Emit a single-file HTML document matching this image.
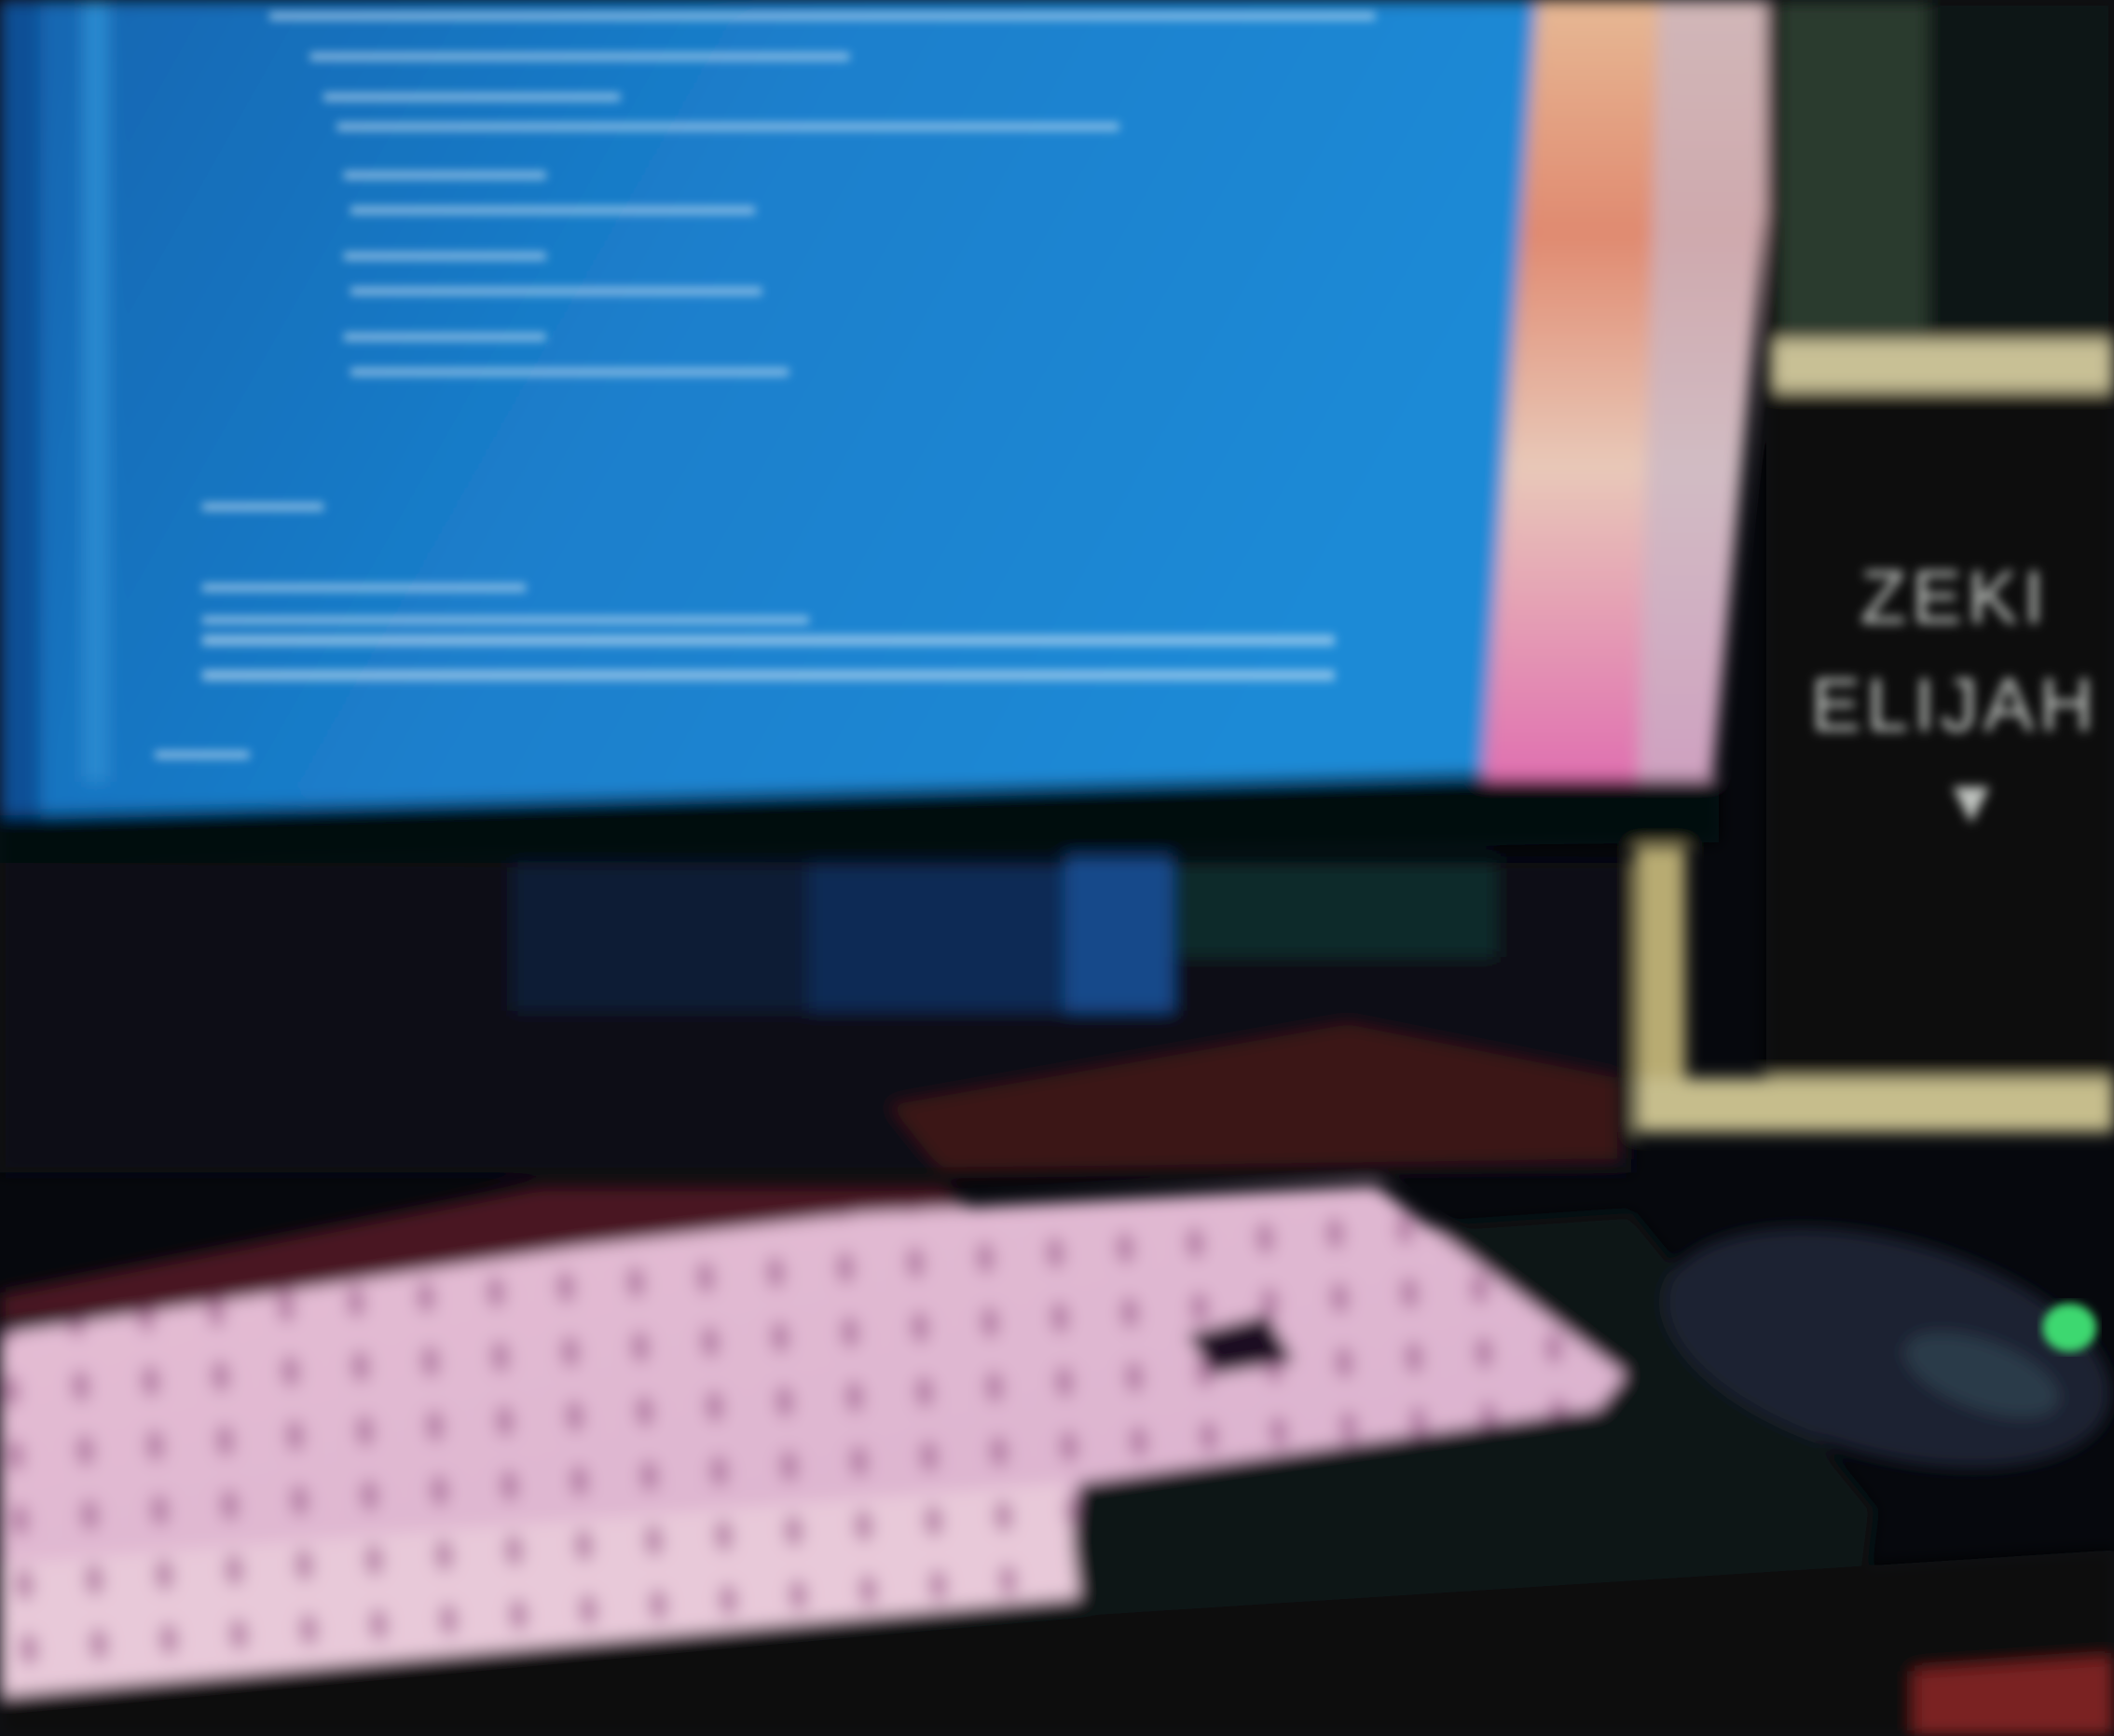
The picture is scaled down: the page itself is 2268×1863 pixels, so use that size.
<!DOCTYPE html>
<html><head><meta charset="utf-8"><style>
html,body{margin:0;padding:0;background:#05070c;}
svg{display:block;width:2268px;height:1863px;}
</style></head><body>
<svg viewBox="0 0 1568 1288" preserveAspectRatio="none" xmlns="http://www.w3.org/2000/svg">
<defs>
<filter id="b" x="-10%" y="-10%" width="120%" height="120%"><feGaussianBlur stdDeviation="6"/></filter>
<filter id="b2"><feGaussianBlur stdDeviation="3.5"/></filter>
<filter id="b3"><feGaussianBlur stdDeviation="4"/></filter>
<linearGradient id="scr" x1="0" y1="0" x2="1" y2="0.3">
<stop offset="0" stop-color="#1565b0"/><stop offset="0.5" stop-color="#1a7fcc"/><stop offset="1" stop-color="#1f8ad6"/></linearGradient>
<linearGradient id="kb" x1="0" y1="0" x2="1" y2="1">
<stop offset="0" stop-color="#e5bdd4"/><stop offset="1" stop-color="#d9b0cd"/></linearGradient>
<linearGradient id="pic" x1="0" y1="0" x2="0" y2="1">
<stop offset="0" stop-color="#e6b894"/><stop offset="0.3" stop-color="#e08a70"/><stop offset="0.6" stop-color="#e8c8b8"/><stop offset="1" stop-color="#e070b0"/></linearGradient>
<pattern id="keys" width="52" height="48" patternUnits="userSpaceOnUse" patternTransform="rotate(-4)">
<ellipse cx="40" cy="22" rx="7" ry="12" fill="#9a5a88" opacity="0.6"/>
</pattern>
<clipPath id="kbc"><polygon points="0,990 430,925 640,900 1020,880 1205,1020 1185,1045 800,1100 790,1185 0,1255"/></clipPath>
</defs>
<rect width="1568" height="1288" fill="#06080d"/>
<g filter="url(#b)">
<polygon points="0,0 1140,0 1105,575 0,605" fill="url(#scr)"/>
<polygon points="1140,0 1325,0 1270,578 1100,578" fill="url(#pic)"/>
<polygon points="1230,0 1325,0 1270,578 1215,578" fill="#c7b6c8" opacity="0.7"/>
<rect x="0" y="0" width="30" height="610" fill="#0f4f96"/>
<rect x="62" y="0" width="18" height="580" fill="#2a8ad0"/>
<polygon points="0,605 1105,578 1275,578 1275,625 0,640" fill="#05070b"/>
<rect x="0" y="640" width="1210" height="230" fill="#070c18"/>
<rect x="380" y="640" width="220" height="110" fill="#0c1a34"/>
<rect x="600" y="640" width="230" height="110" fill="#0f2a55"/>
<rect x="790" y="635" width="80" height="115" fill="#134a8a"/>
<rect x="870" y="640" width="240" height="70" fill="#102a2c"/>
<polygon points="660,820 1000,760 1200,800 1200,860 700,870" fill="#3a1414"/>
<polygon points="0,960 400,880 700,880 760,930 0,1000" fill="#4a1820"/>
<rect x="1310" y="0" width="258" height="830" fill="#0a0d0b"/>
<rect x="1320" y="0" width="110" height="250" fill="#2a3a2e"/>
<rect x="1430" y="0" width="138" height="250" fill="#111514"/>
<rect x="1315" y="252" width="253" height="38" fill="#c8c095"/>
<rect x="1213" y="628" width="37" height="210" fill="#b8ab72"/>
<rect x="1213" y="800" width="355" height="40" fill="#c6bd8c"/>
<polygon points="0,980 1210,900 1390,1120 1380,1200 0,1288" fill="#0f1416"/>
<polygon points="0,1250 1568,1150 1568,1288 0,1288" fill="#0a0c0e"/>
<polygon points="0,990 430,925 640,900 1020,880 1205,1020 1185,1045 800,1100 790,1185 0,1255" fill="url(#kb)"/>
<polygon points="0,1160 790,1100 800,1185 0,1258" fill="#e8c9d9"/>
<g clip-path="url(#kbc)"><rect x="0" y="860" width="1220" height="400" fill="url(#keys)"/></g>
<polygon points="880,990 940,975 960,1010 900,1020" fill="#1a1020"/>
<ellipse cx="1400" cy="1000" rx="170" ry="80" fill="#1a2430" transform="rotate(15 1400 1000)"/>
<ellipse cx="1470" cy="1020" rx="60" ry="25" fill="#2a3a4a" transform="rotate(20 1470 1020)"/>
<polygon points="1420,1240 1568,1230 1568,1288 1420,1288" fill="#7a2020"/>
</g>
<ellipse cx="1535" cy="985" rx="20" ry="18" fill="#3dd870" filter="url(#b2)"/>
<g filter="url(#b2)" fill="#cfe4f5" opacity="0.6">
<rect x="200" y="9" width="820" height="6"/>
<rect x="230" y="39" width="400" height="6"/>
<rect x="240" y="69" width="220" height="6"/>
<rect x="250" y="91" width="580" height="6"/>
<rect x="255" y="127" width="150" height="6"/>
<rect x="260" y="153" width="300" height="6"/>
<rect x="255" y="187" width="150" height="6"/>
<rect x="260" y="213" width="305" height="6"/>
<rect x="255" y="247" width="150" height="6"/>
<rect x="260" y="273" width="325" height="6"/>
<rect x="150" y="373" width="90" height="6"/>
<rect x="150" y="433" width="240" height="6"/>
<rect x="150" y="457" width="450" height="6"/>
<rect x="150" y="471" width="840" height="8"/>
<rect x="150" y="497" width="840" height="8"/>
<rect x="115" y="557" width="70" height="6"/>
</g>
<g fill="#bfc3bf" font-family="Liberation Sans Narrow, Liberation Sans, sans-serif" font-size="56" text-anchor="middle" filter="url(#b3)" letter-spacing="4">
<text x="1450" y="462">ZEKI</text>
<text x="1450" y="542">ELIJAH</text>
<text x="1462" y="610" font-size="46" letter-spacing="0">▼</text>
</g>
</svg>
</body></html>
